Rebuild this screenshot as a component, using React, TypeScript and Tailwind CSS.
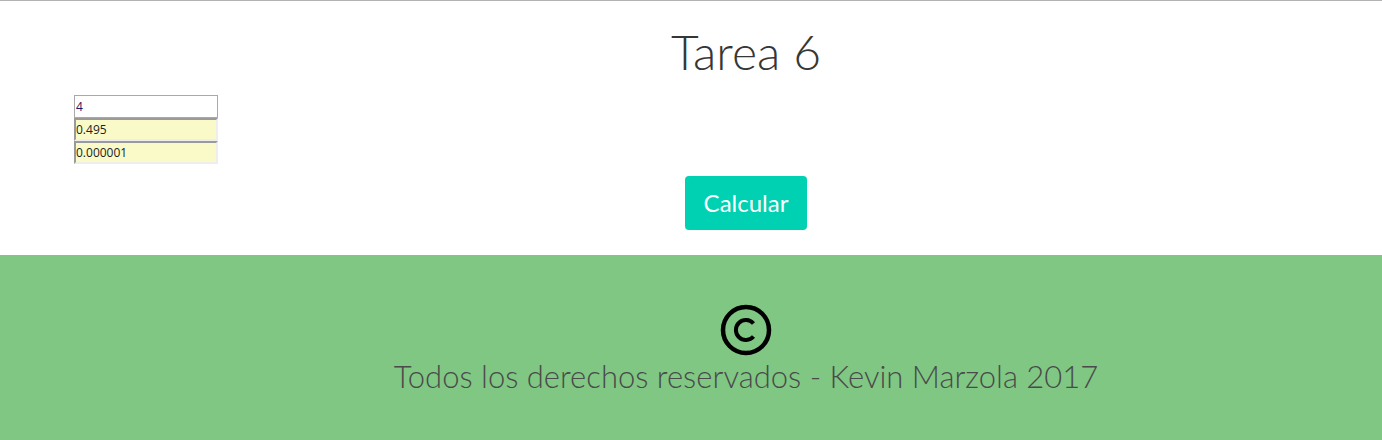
import React from "react";

export default function App() {
  const font = { fontFamily: 'Lato, "Open Sans", sans-serif' };
  return (
    <div className="w-[1382px] h-[440px] bg-white overflow-hidden border-t border-[#b3b3b3]" style={font}>
      <div className="h-[254px] flex flex-col">
        <h1 className="pl-[110px] text-center text-[48px] leading-[48px] font-light text-[#363636] pt-[27px] h-[94px]">
          Tarea 6
        </h1>
        <div className="ml-[74px] w-[144px] flex flex-col" style={{ fontFamily: '"Open Sans", sans-serif' }}>
          <input
            defaultValue="4"
            className="h-[23px] w-[144px] bg-white border border-[#a9a9a9] px-[1px] text-[12px] text-[#2a1060] outline-none"
          />
          <input
            defaultValue="0.495"
            className="h-[23px] w-[144px] bg-[#fafac8] border-2 border-t-[#9a9a9a] border-l-[#9a9a9a] border-r-[#eeeeee] border-b-[#eeeeee] px-0 text-[12px] text-[#222] outline-none"
          />
          <input
            defaultValue="0.000001"
            className="h-[23px] w-[144px] bg-[#fafac8] border-2 border-t-[#9a9a9a] border-l-[#9a9a9a] border-r-[#eeeeee] border-b-[#eeeeee] px-0 text-[12px] text-[#222] outline-none"
          />
        </div>
        <div className="pl-[110px] flex justify-center mt-[12px]">
          <button className="h-[54px] w-[122px] rounded-[4px] bg-[#00d1b2] text-white text-[24px] leading-none font-normal">
            Calcular
          </button>
        </div>
      </div>
      <footer className="h-[186px] bg-[#80c784] pl-[110px] flex flex-col items-center pt-[49px]">
        <svg width="52" height="52" viewBox="0 0 52 52">
          <circle cx="26" cy="26" r="23" fill="none" stroke="#000" strokeWidth="4.5" />
          <path d="M33.5 19.5 A10 10 0 1 0 33.5 32.5" fill="none" stroke="#000" strokeWidth="4" />
        </svg>
        <p className="text-[31px] leading-[40px] font-light text-[#4a4a4a] mt-[0px]">
          Todos los derechos reservados - Kevin Marzola 2017
        </p>
      </footer>
    </div>
  );
}
